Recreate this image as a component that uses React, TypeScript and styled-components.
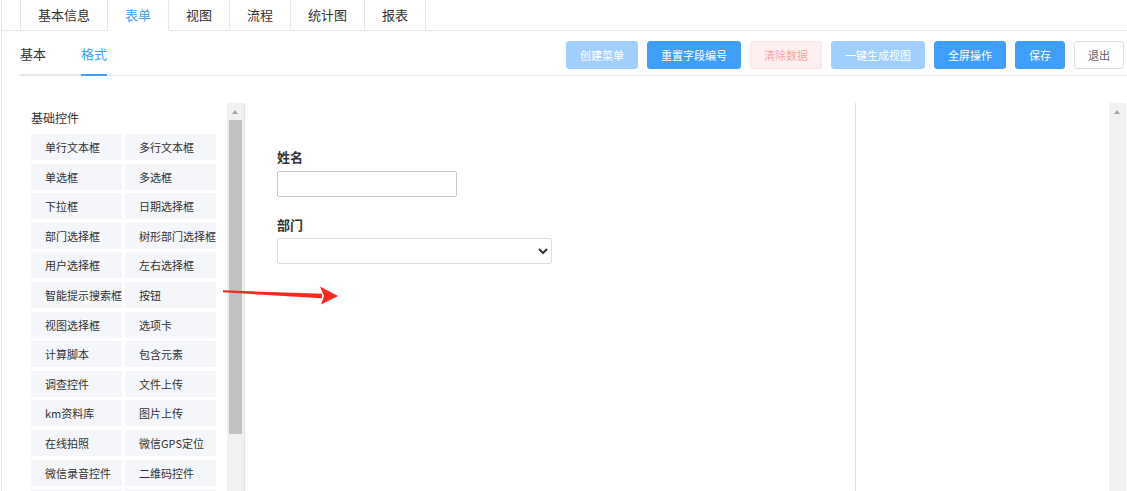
import React from "react";
import styled, { createGlobalStyle } from "styled-components";

const Global = createGlobalStyle`
  html, body {
    margin: 0;
    padding: 0;
    background: #fff;
    overflow: hidden;
  }
  body {
    font-family: "Noto Sans CJK SC", "Noto Sans", sans-serif;
    color: #303133;
  }
  * { box-sizing: border-box; }
`;

const Page = styled.div`
  position: relative;
  width: 1126px;
  height: 491px;
  margin-left: 1px;
  border-left: 1px solid #e4e7ed;
  overflow: hidden;
`;

const TabBar = styled.div`
  display: flex;
  align-items: flex-start;
  height: 31px;
  padding-left: 18px;
  border-bottom: 1px solid #e4e7ed;
`;

const Tab = styled.div<{ $active?: boolean }>`
  height: 31px;
  padding: 0 17px;
  font-size: 13px;
  line-height: 29px;
  color: ${(p) => (p.$active ? "#409eff" : "#303133")};
  border-right: 1px solid #e4e7ed;
  border-bottom: 1px solid ${(p) => (p.$active ? "#fff" : "#e4e7ed")};
  background: #fff;
  &:first-child {
    border-left: 1px solid #e4e7ed;
  }
`;

const HeaderRow = styled.div`
  display: flex;
  justify-content: space-between;
  align-items: flex-start;
  height: 45px;
  margin-left: 18px;
  padding-right: 3px;
  border-bottom: 1px solid #e4e7ed;
`;

const SubNav = styled.div`
  display: flex;
  align-self: flex-end;
  margin-bottom: -1px;
`;

const SubTab = styled.div<{ $active?: boolean; $pad?: number }>`
  font-size: 13px;
  line-height: 28px;
  padding-bottom: 6px;
  padding-right: ${(p) => p.$pad ?? 0}px;
  color: ${(p) => (p.$active ? "#409eff" : "#303133")};
  border-bottom: 2px solid ${(p) => (p.$active ? "#409eff" : "#e4e7ed")};
`;

const Toolbar = styled.div`
  display: flex;
  gap: 9px;
  padding-top: 10px;
`;

type Variant = "primary" | "primaryDisabled" | "dangerDisabled" | "plain";

const btnColors: Record<Variant, { bg: string; border: string; color: string }> = {
  primary: { bg: "#409eff", border: "#409eff", color: "#fff" },
  primaryDisabled: { bg: "#a0cfff", border: "#a0cfff", color: "#fff" },
  dangerDisabled: { bg: "#fef0f0", border: "#fde2e2", color: "#f9a7a7" },
  plain: { bg: "#fff", border: "#dcdfe6", color: "#606266" },
};

const Button = styled.button<{ $variant: Variant }>`
  height: 28px;
  padding: 0 13px;
  font-family: inherit;
  font-size: 11px;
  line-height: 26px;
  border-radius: 3px;
  border: 1px solid ${(p) => btnColors[p.$variant].border};
  background: ${(p) => btnColors[p.$variant].bg};
  color: ${(p) => btnColors[p.$variant].color};
  white-space: nowrap;
`;

const Body = styled.div`
  display: flex;
  margin-top: 27px;
  height: 388px;
`;

const LeftPanel = styled.div`
  width: 225px;
  padding: 7px 0 0 29px;
  overflow: hidden;
`;

const PanelTitle = styled.div`
  font-size: 12px;
  line-height: 16px;
  color: #303133;
  margin-bottom: 8px;
`;

const ControlGrid = styled.div`
  display: grid;
  grid-template-columns: 91px 91px;
  grid-auto-rows: 26px;
  column-gap: 3px;
  row-gap: 3.6px;
`;

const ControlItem = styled.div`
  background: #f4f6fa;
  font-size: 11px;
  line-height: 26px;
  color: #333;
  padding-left: 14px;
  white-space: nowrap;
  overflow: hidden;
`;

const ScrollTrack = styled.div<{ $mr?: number }>`
  position: relative;
  width: 17px;
  flex: none;
  background: #f1f1f1;
  margin-right: ${(p) => p.$mr ?? 0}px;
  &::before {
    content: "";
    position: absolute;
    left: 5px;
    top: 7px;
    border-left: 3.5px solid transparent;
    border-right: 3.5px solid transparent;
    border-bottom: 4px solid #a3a3a3;
  }
`;

const ScrollThumb = styled.div`
  margin: 17px 2px 0;
  height: 314px;
  background: #c1c1c1;
`;

const Canvas = styled.div`
  width: 612px;
  flex: none;
  border-left: 1px solid #e2e2e2;
  border-right: 1px solid #dddddd;
  padding: 45px 0 0 32px;
`;

const FieldLabel = styled.div<{ $mt?: number }>`
  font-size: 13px;
  font-weight: 700;
  line-height: 18px;
  color: #333;
  margin-top: ${(p) => p.$mt ?? 0}px;
  margin-bottom: ${(p) => (p.$mt ? 4 : 5)}px;
`;

const TextInput = styled.input`
  display: block;
  width: 180px;
  height: 26px;
  border: 1px solid #c8c8c8;
  border-radius: 2px;
  padding: 0 6px;
  outline: none;
  background: #fff;
`;

const Select = styled.select`
  display: block;
  width: 275px;
  height: 26px;
  border: 1px solid #dddddd;
  border-radius: 2px;
  background: #fff;
  font-size: 13px;
  color: #333;
  outline: none;
`;

const RightPanel = styled.div`
  flex: 1;
`;

const Arrow = styled.svg`
  position: absolute;
  left: 218px;
  top: 284px;
  width: 122px;
  height: 24px;
  overflow: visible;
  pointer-events: none;
`;

const tabs = ["基本信息", "表单", "视图", "流程", "统计图", "报表"];

const buttons: { label: string; variant: Variant }[] = [
  { label: "创建菜单", variant: "primaryDisabled" },
  { label: "重置字段编号", variant: "primary" },
  { label: "清除数据", variant: "dangerDisabled" },
  { label: "一键生成视图", variant: "primaryDisabled" },
  { label: "全屏操作", variant: "primary" },
  { label: "保存", variant: "primary" },
  { label: "退出", variant: "plain" },
];

const controls = [
  "单行文本框", "多行文本框",
  "单选框", "多选框",
  "下拉框", "日期选择框",
  "部门选择框", "树形部门选择框",
  "用户选择框", "左右选择框",
  "智能提示搜索框", "按钮",
  "视图选择框", "选项卡",
  "计算脚本", "包含元素",
  "调查控件", "文件上传",
  "km资料库", "图片上传",
  "在线拍照", "微信GPS定位",
  "微信录音控件", "二维码控件",
  "", "",
];

export default function App() {
  return (
    <>
      <Global />
      <Page>
        <TabBar>
          {tabs.map((t) => (
            <Tab key={t} $active={t === "表单"}>
              {t}
            </Tab>
          ))}
        </TabBar>
        <HeaderRow>
          <SubNav>
            <SubTab $pad={35}>基本</SubTab>
            <SubTab $active>格式</SubTab>
          </SubNav>
          <Toolbar>
            {buttons.map((b) => (
              <Button key={b.label} $variant={b.variant}>
                {b.label}
              </Button>
            ))}
          </Toolbar>
        </HeaderRow>
        <Body>
          <LeftPanel>
            <PanelTitle>基础控件</PanelTitle>
            <ControlGrid>
              {controls.map((c, i) => (
                <ControlItem key={i}>{c}</ControlItem>
              ))}
            </ControlGrid>
          </LeftPanel>
          <ScrollTrack>
            <ScrollThumb />
          </ScrollTrack>
          <Canvas>
            <FieldLabel>姓名</FieldLabel>
            <TextInput type="text" />
            <FieldLabel $mt={19}>部门</FieldLabel>
            <Select>
              <option value=""></option>
            </Select>
          </Canvas>
          <RightPanel />
          <ScrollTrack $mr={1} />
        </Body>
        <Arrow viewBox="0 0 122 24">
          <polygon points="3,6.3 3,8.3 102,14.2 102,9.8" fill="#f5291c" />
          <polygon points="100,2.5 118,12 101,20.5 104,12" fill="#f5291c" />
        </Arrow>
      </Page>
    </>
  );
}
